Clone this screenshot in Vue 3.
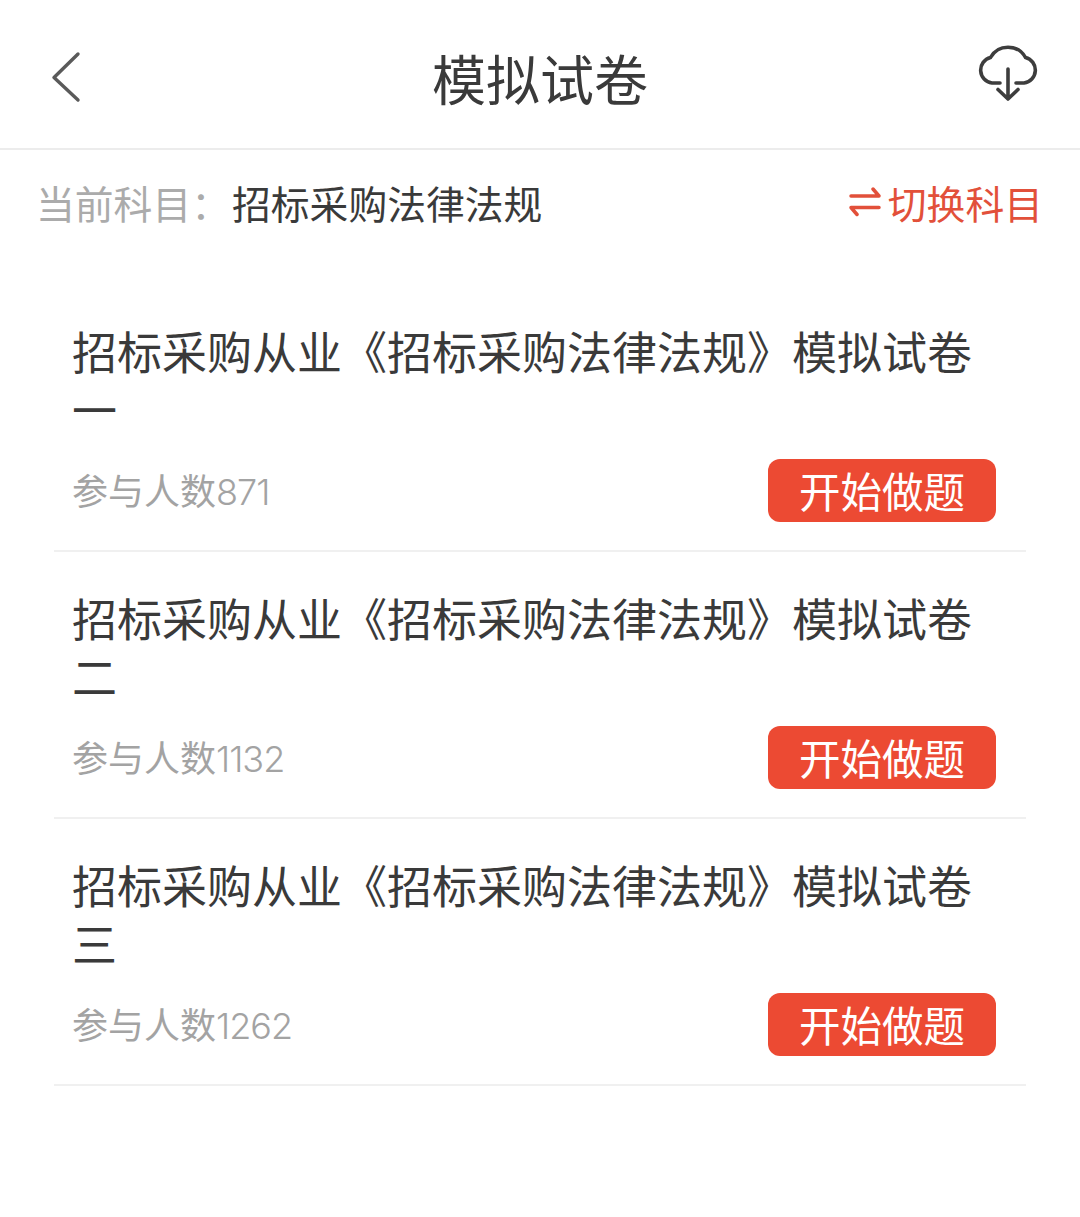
<script setup>
const papers = [
  { name: "招标采购从业《招标采购法律法规》模拟试卷一", count: 871 },
  { name: "招标采购从业《招标采购法律法规》模拟试卷二", count: 1132 },
  { name: "招标采购从业《招标采购法律法规》模拟试卷三", count: 1262 },
];
</script>

<template>
  <div class="page">
    <header class="topbar">
      <svg class="back" width="32" height="52" viewBox="0 0 32 52">
        <path d="M28 3 L4 26.5 L28 49" fill="none" stroke="#5a5a5a" stroke-width="3.4" stroke-linecap="round" stroke-linejoin="round" />
      </svg>
      <h1 class="title">模拟试卷</h1>
      <svg class="cloud" width="62" height="60" viewBox="0 0 62 60">
        <path d="M23 41 H15 A13 13 0 0 1 13.500 15.500 A20 20 0 0 1 48.500 15.500 A13 13 0 0 1 47 41 H39" fill="none" stroke="#3d3d3d" stroke-width="3.600" stroke-linecap="round" />
        <path d="M31 27 V57 M21 47.500 L31 57 L41 47.500" fill="none" stroke="#3d3d3d" stroke-width="3.600" stroke-linecap="round" stroke-linejoin="round" />
      </svg>
    </header>

    <div class="subject">
      <span class="label">当前科目：</span>
      <span class="current">招标采购法律法规</span>
      <span class="switch">
        <svg width="32" height="30" viewBox="0 0 32 30">
          <path d="M2 9 H30 L24 2 M30 20.500 H2 L8 27.500" fill="none" stroke="#e2503a" stroke-width="3.500" stroke-linecap="round" stroke-linejoin="round" />
        </svg>
        切换科目
      </span>
    </div>

    <ul class="list">
      <li v-for="paper in papers" :key="paper.count" class="row">
        <p class="name">{{ paper.name }}</p>
        <div class="meta">
          <span class="count">参与人数<span class="num">{{ paper.count }}</span></span>
          <button class="start">开始做题</button>
        </div>
      </li>
    </ul>
  </div>
</template>

<style>
html,
body {
  margin: 0;
  background: #fff;
}
</style>

<style scoped>
.page {
  width: 1080px;
  height: 1217px;
  background: #fff;
  font-family: "Noto Sans CJK SC", "Noto Sans", sans-serif;
  overflow: hidden;
}

.topbar {
  position: relative;
  height: 148px;
  border-bottom: 2px solid #ececec;
  display: flex;
  align-items: center;
  justify-content: space-between;
  padding: 0 41px 0 50px;
}

.back {
  margin-top: 6px;
}

/* centred over the bar, independent of the two icons */
.title {
  position: absolute;
  left: 0;
  right: 0;
  top: 51px;
  margin: 0;
  text-align: center;
  font-size: 54px;
  font-weight: 400;
  color: #3a3a3a;
  line-height: 1;
}

.cloud {
  margin-top: -4px;
}

.subject {
  height: 104px;
  display: flex;
  align-items: center;
  padding: 0 37px 0 36px;
  font-size: 38.800px;
  color: #3a3a3a;
}

.label {
  color: #ababab;
  width: 196px;
}

.switch {
  margin-left: auto;
  display: flex;
  align-items: center;
  gap: 7px;
  color: #e2503a;
}

.list {
  list-style: none;
  margin: 31px 54px 0;
  padding: 0;
}

.row {
  box-sizing: content-box;
  height: 228px;
  border-bottom: 2px solid #f0f0f0;
  padding: 37px 30px 0 18px;
}

.name {
  margin: 0;
  font-size: 45px;
  line-height: 58px;
  color: #3a3a3a;
  height: 116px;
  width: 900px;
}

.meta {
  display: flex;
  align-items: center;
  justify-content: space-between;
  margin-top: 21px;
}

.count {
  font-size: 36px;
  color: #a3a3a3;
  padding-bottom: 4px;
}

.num {
  font-family: Inter, sans-serif;
  font-weight: 300;
  letter-spacing: -1px;
}

.start {
  width: 228px;
  height: 63px;
  border: 0;
  border-radius: 12px;
  background: #ec4a33;
  color: #fff;
  font-family: inherit;
  font-size: 41.500px;
  padding: 0 0 2px;
}
</style>
